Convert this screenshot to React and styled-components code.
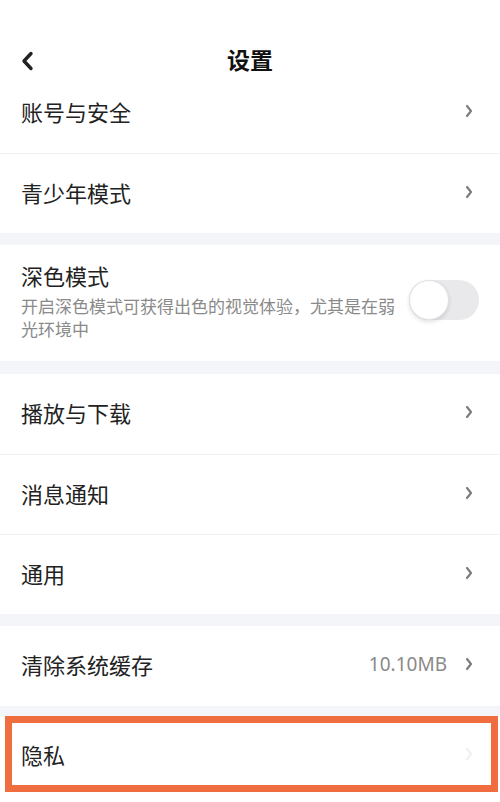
import React from "react";
import styled, { createGlobalStyle } from "styled-components";

const GlobalStyle = createGlobalStyle`
  * { box-sizing: border-box; }
  body {
    margin: 0;
    background: #ffffff;
    font-family: "Noto Sans CJK SC", "Noto Sans", sans-serif;
    color: #222222;
  }
`;

const Page = styled.div`
  width: 500px;
  min-height: 802px;
  background: #ffffff;
  display: flex;
  flex-direction: column;
`;

const Header = styled.header`
  height: 73px;
  padding: 48px 21px 0;
  display: flex;
  align-items: center;
  position: relative;
`;

const BackButton = styled.div`
  width: 24px;
  height: 24px;
  display: flex;
  align-items: center;
`;

const Title = styled.h1`
  position: absolute;
  left: 0;
  right: 0;
  bottom: 2px;
  top: 46px;
  margin: 0;
  display: flex;
  align-items: center;
  justify-content: center;
  font-size: 23px;
  font-weight: 700;
  color: #111111;
  pointer-events: none;
`;

const Group = styled.section`
  background: #ffffff;
`;

const Gap = styled.div`
  height: ${(p) => p.$h || 12}px;
  background: #f4f5f9;
`;

const Row = styled.div`
  position: relative;
  height: 80px;
  padding: 0 27px 4px 21px;
  display: flex;
  align-items: center;
  justify-content: space-between;

  & + & {
    border-top: 1px solid #f1f1f3;
  }

  ${(p) =>
    p.$highlight &&
    `
    &::after {
      content: "";
      position: absolute;
      top: 0;
      left: 5px;
      right: 2px;
      bottom: 4px;
      border: 7px solid #ef6d3f;
      pointer-events: none;
    }
  `}
`;

const Label = styled.span`
  font-size: 22px;
  line-height: 30px;
  color: #222222;
`;

const Trailing = styled.div`
  display: flex;
  align-items: center;
  gap: 18px;
`;

const Value = styled.span`
  font-family: "Noto Sans", "Noto Sans CJK SC", sans-serif;
  font-size: 19px;
  color: #8a8a8a;
`;

const ToggleRow = styled.div`
  padding: 15px 21px 21px 21px;
  display: flex;
  align-items: center;
  justify-content: space-between;
`;

const ToggleText = styled.div`
  width: 380px;
  display: flex;
  flex-direction: column;
  gap: 4px;
`;

const Hint = styled.p`
  margin: 0;
  font-size: 17px;
  line-height: 23px;
  color: #8a8a8a;
`;

const Switch = styled.div`
  width: 70px;
  height: 40px;
  border-radius: 20px;
  background: ${(p) => (p.$on ? "#3b7cff" : "#e9e9ec")};
  display: flex;
  align-items: center;
  justify-content: ${(p) => (p.$on ? "flex-end" : "flex-start")};
`;

const Knob = styled.div`
  width: 40px;
  height: 40px;
  border-radius: 50%;
  background: #ffffff;
  border: 1px solid #e2e2e2;
  box-shadow: 0 2px 4px rgba(0, 0, 0, 0.12);
`;

const Chevron = ({ color = "#7d7d7d" }) => (
  <svg width="8" height="14" viewBox="0 0 8 14">
    <path
      d="M2 2 L6 7 L2 12"
      fill="none"
      stroke={color}
      strokeWidth="2.2"
      strokeLinecap="round"
      strokeLinejoin="round"
    />
  </svg>
);

const BackIcon = () => (
  <svg width="13" height="20" viewBox="0 0 13 20">
    <path
      d="M10 2.5 L3 10 L10 17.5"
      fill="none"
      stroke="#222"
      strokeWidth="3.4"
      strokeLinecap="round"
      strokeLinejoin="round"
    />
  </svg>
);

const LinkRow = ({ label, value, faint, highlight }) => (
  <Row $highlight={highlight}>
    <Label>{label}</Label>
    <Trailing>
      {value && <Value>{value}</Value>}
      <Chevron color={faint ? "#f0f0f2" : "#7d7d7d"} />
    </Trailing>
  </Row>
);

export default function App() {
  return (
    <Page>
      <GlobalStyle />
      <Header>
        <BackButton>
          <BackIcon />
        </BackButton>
        <Title>设置</Title>
      </Header>

      <Group>
        <LinkRow label="账号与安全" />
        <LinkRow label="青少年模式" />
      </Group>
      <Gap $h={12} />

      <Group>
        <ToggleRow>
          <ToggleText>
            <Label>深色模式</Label>
            <Hint>开启深色模式可获得出色的视觉体验，尤其是在弱光环境中</Hint>
          </ToggleText>
          <Switch>
            <Knob />
          </Switch>
        </ToggleRow>
      </Group>
      <Gap $h={13} />

      <Group>
        <LinkRow label="播放与下载" />
        <LinkRow label="消息通知" />
        <LinkRow label="通用" />
      </Group>
      <Gap $h={12} />

      <Group>
        <LinkRow label="清除系统缓存" value="10.10MB" />
      </Group>
      <Gap $h={10} />

      <Group>
        <LinkRow label="隐私" faint highlight />
      </Group>
    </Page>
  );
}
